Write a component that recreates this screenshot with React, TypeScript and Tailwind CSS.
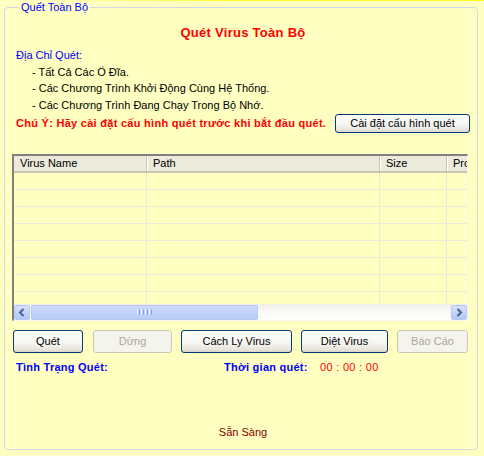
import React from "react";

function XPButton({
  children,
  className,
  disabled,
}: {
  children: React.ReactNode;
  className: string;
  disabled?: boolean;
}) {
  return (
    <button
      className={
        disabled
          ? `${className} shrink-0 rounded-[3px] border border-[#cac8bb] bg-[#f5f4ec] text-[11px] leading-none text-[#aca899]`
          : `${className} shrink-0 rounded-[3px] border border-[#003c74] bg-[linear-gradient(180deg,#ffffff_0%,#f4f4f0_60%,#e6e3da_90%,#d8d3c8_100%)] text-[11px] leading-none text-black`
      }
    >
      {children}
    </button>
  );
}

function ScrollArrow({ dir }: { dir: "left" | "right" }) {
  return (
    <div className="flex h-[15px] w-[16px] shrink-0 items-center justify-center rounded-[2px] border border-[#b6c9f5] bg-[linear-gradient(180deg,#d6e2fe_0%,#c0d2fc_60%,#b2c7f7_100%)]">
      <svg width="8" height="9" viewBox="0 0 8 9">
        {dir === "left" ? (
          <polyline points="5.5,1 2,4.5 5.5,8" fill="none" stroke="#4d6185" strokeWidth="2" />
        ) : (
          <polyline points="2.5,1 6,4.5 2.5,8" fill="none" stroke="#4d6185" strokeWidth="2" />
        )}
      </svg>
    </div>
  );
}

export default function App() {
  const rows = [0, 1, 2, 3, 4, 5, 6, 7];
  return (
    <div className="h-[456px] w-[484px] overflow-hidden bg-[#ffffc2] font-['Liberation_Sans','Arial',sans-serif] text-[11px] text-black">
      <div className="h-[1px] w-full bg-[linear-gradient(90deg,#ffffc2_10%,#ffff30_45%,#ffff20_100%)]" />
      <fieldset className="ml-[4px] h-[449px] w-[474px] rounded-[4px] border border-[#d2d9e4]">
        <legend className="ml-[14px] px-[2px] text-[11px] leading-[13px] text-[#0000ff]">Quết Toàn Bộ</legend>
        <div className="flex flex-col px-[7px]">
          <div className="mt-[11px] h-[16px] pl-[4px] text-center text-[13px] font-bold leading-[16px] tracking-[0.28px] text-[#ff0000]">
            Quét Virus Toàn Bộ
          </div>
          <div className="mt-[6px] flex flex-col pl-[4px] leading-[16.5px]">
            <div className="text-[#0000ff]">Địa Chỉ Quét:</div>
            <div className="pl-[16px]">- Tất Cả Các Ổ Đĩa.</div>
            <div className="pl-[16px]">- Các Chương Trình Khởi Động Cùng Hệ Thống.</div>
            <div className="pl-[16px]">- Các Chương Trình Đang Chạy Trong Bộ Nhớ.</div>
          </div>
          <div className="mt-[1px] flex h-[19px] items-center pl-[4px]">
            <div className="font-bold tracking-[0.28px] text-[#ff0000]">Chú Ý: Hãy cài đặt cấu hình quét trước khi bắt đầu quét.</div>
            <XPButton className="ml-auto h-[19px] w-[135px]">Cài đặt cấu hình quét</XPButton>
          </div>

          {/* list view */}
          <div className="mt-[21px] flex h-[167px] w-[456px] flex-col overflow-hidden border-t-2 border-b border-l-2 border-r border-t-[#808080] border-l-[#808080] border-b-[#f4f4ee] border-r-[#f4f4ee]">
            <div className="flex h-[17px] shrink-0 border-b-2 border-[#cbc7b6] bg-[#ebeadb] leading-[15px]">
              <div className="w-[133px] shrink-0 border-r border-[#c7c4b3] pl-[6px]">Virus Name</div>
              <div className="w-[233px] shrink-0 border-r border-l border-r-[#c7c4b3] border-l-white pl-[5px]">Path</div>
              <div className="w-[67px] shrink-0 border-r border-l border-r-[#c7c4b3] border-l-white pl-[5px]">Size</div>
              <div className="w-[60px] shrink-0 overflow-hidden whitespace-nowrap border-l border-l-white pl-[5px]">Progress</div>
            </div>
            <div className="flex h-[131px] shrink-0 flex-col overflow-hidden">
              {rows.map((r) => (
                <div key={r} className="flex h-[17px] shrink-0 border-b border-[#ebe9dc]">
                  <div className="w-[133px] shrink-0 border-r border-[#ebe9dc]" />
                  <div className="w-[233px] shrink-0 border-r border-[#ebe9dc]" />
                  <div className="w-[67px] shrink-0 border-r border-[#ebe9dc]" />
                  <div className="flex-1" />
                </div>
              ))}
            </div>
            <div className="flex h-[16px] shrink-0 items-center bg-[linear-gradient(180deg,#eeede6_0%,#f8f8f4_40%,#fdfdfb_100%)]">
              <ScrollArrow dir="left" />
              <div className="ml-[1px] flex h-[15px] w-[227px] items-center justify-center rounded-[2px] border border-[#b4c7f2] bg-[linear-gradient(180deg,#cddbfd_0%,#c2d3fc_50%,#b8ccf8_100%)]">
                <div className="flex gap-[1px]">
                  <div className="h-[6px] w-[1px] bg-[#eef3ff]" />
                  <div className="h-[6px] w-[1px] bg-[#8aa5e6]" />
                  <div className="h-[6px] w-[1px] bg-[#eef3ff]" />
                  <div className="h-[6px] w-[1px] bg-[#8aa5e6]" />
                  <div className="h-[6px] w-[1px] bg-[#eef3ff]" />
                  <div className="h-[6px] w-[1px] bg-[#8aa5e6]" />
                  <div className="h-[6px] w-[1px] bg-[#eef3ff]" />
                  <div className="h-[6px] w-[1px] bg-[#8aa5e6]" />
                </div>
              </div>
              <div className="ml-auto">
                <ScrollArrow dir="right" />
              </div>
            </div>
          </div>

          {/* buttons */}
          <div className="mt-[9px] flex h-[23px]">
            <XPButton className="ml-[1px] h-[23px] w-[70px]">Quét</XPButton>
            <XPButton className="ml-[10px] h-[23px] w-[79px]" disabled>
              Dừng
            </XPButton>
            <XPButton className="ml-[9px] h-[23px] w-[111px]">Cách Ly Virus</XPButton>
            <XPButton className="ml-[9px] h-[23px] w-[87px]">Diệt Virus</XPButton>
            <XPButton className="ml-[9px] h-[23px] w-[71px]" disabled>
              Báo Cáo
            </XPButton>
          </div>

          {/* status */}
          <div className="mt-[7px] flex h-[14px] items-center pl-[4px] leading-[14px]">
            <div className="w-[208px] shrink-0 font-bold tracking-[0.25px] text-[#0000ff]">Tình Trạng Quét:</div>
            <div className="w-[96px] shrink-0 font-bold tracking-[0.25px] text-[#0000ff]">Thời gian quét:</div>
            <div className="tracking-[0.3px] text-[#ff0000]">00 : 00 : 00</div>
          </div>

          <div className="mt-[51px] h-[14px] pl-[4px] text-center leading-[14px] text-[#800000]">Sẵn Sàng</div>
        </div>
      </fieldset>
    </div>
  );
}
